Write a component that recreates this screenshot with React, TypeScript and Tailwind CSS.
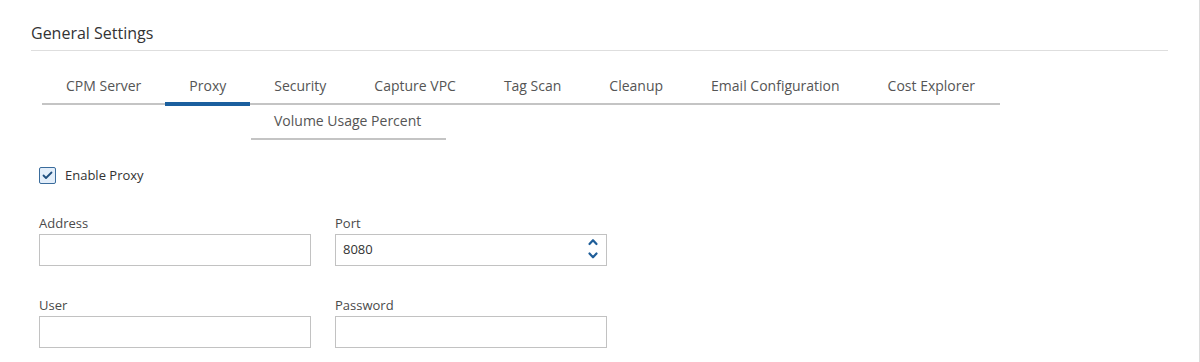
import React from "react";

const tabs1 = ["CPM Server", "Proxy", "Security", "Capture VPC", "Tag Scan", "Cleanup", "Email Configuration", "Cost Explorer"];

function Field({ label, value, spinner }: { label: string; value?: string; spinner?: boolean }) {
  return (
    <div className="flex flex-col w-[272px]">
      <div className="text-[13px] leading-[18px] text-[#4a4a4a]">{label}</div>
      <div className="mt-[2px] h-[32px] border border-[#c2c2c2] bg-white flex items-center justify-between pl-[7px] pr-[8px]">
        <span className="text-[13px] text-[#333]">{value ?? ""}</span>
        {spinner && (
          <svg width="12" height="24" viewBox="0 0 12 24" className="mr-[-1px]">
            <path d="M2.5 6 L6 2.2 L9.5 6" fill="none" stroke="#1f5e99" strokeWidth="2.2" strokeLinecap="round" strokeLinejoin="round" />
            <path d="M2.5 15.5 L6 19.3 L9.5 15.5" fill="none" stroke="#1f5e99" strokeWidth="2.2" strokeLinecap="round" strokeLinejoin="round" />
          </svg>
        )}
      </div>
    </div>
  );
}

export default function App() {
  return (
    <div className="w-[1200px] h-[362px] bg-white border-r border-[#dcdcdc] overflow-hidden" style={{ fontFamily: '"Open Sans", sans-serif' }}>
      <div className="pl-[31px] pt-[22px] w-[1168px]">
        <div className="text-[16px] leading-[22px] text-[#333]">General Settings</div>
        <div className="mt-[6px] h-px bg-[#dedede]" />
        <div className="ml-[11px] mt-[15px]">
          <div className="flex w-[958px] border-b-2 border-[#c4c4c4]">
            {tabs1.map((t) => (
              <div key={t} className="relative px-[24px] pt-[10px] pb-[7px] text-[14px] leading-[20px] text-[#555] whitespace-nowrap">
                {t}
                {t === "Proxy" && <div className="absolute left-0 right-0 bottom-[-3px] h-[4px] bg-[#1a5f9e]" />}
              </div>
            ))}
          </div>
          <div className="flex ml-[209px]">
            <div className="px-[23px] pt-[6px] pb-[7px] text-[14px] leading-[20px] text-[#555] border-b-2 border-[#c4c4c4] w-[195px]">
              Volume Usage Percent
            </div>
          </div>
        </div>
        <div className="ml-[8px] mt-[27px]">
          <div className="flex items-center h-[17px]">
            <div className="w-[17px] h-[17px] rounded-[2px] border border-[#3a6c9c] bg-[#e3eefa] flex items-center justify-center">
              <svg width="11" height="9" viewBox="0 0 11 9">
                <path d="M1.5 4.5 L4 7 L9.5 1.5" fill="none" stroke="#1f4f7f" strokeWidth="1.8" strokeLinecap="round" strokeLinejoin="round" />
              </svg>
            </div>
            <span className="ml-[9px] text-[13px] text-[#333]">Enable Proxy</span>
          </div>
          <div className="mt-[30px] flex gap-[24px]">
            <Field label="Address" />
            <Field label="Port" value="8080" spinner />
          </div>
          <div className="mt-[30px] flex gap-[24px]">
            <Field label="User" />
            <Field label="Password" />
          </div>
        </div>
      </div>
    </div>
  );
}
